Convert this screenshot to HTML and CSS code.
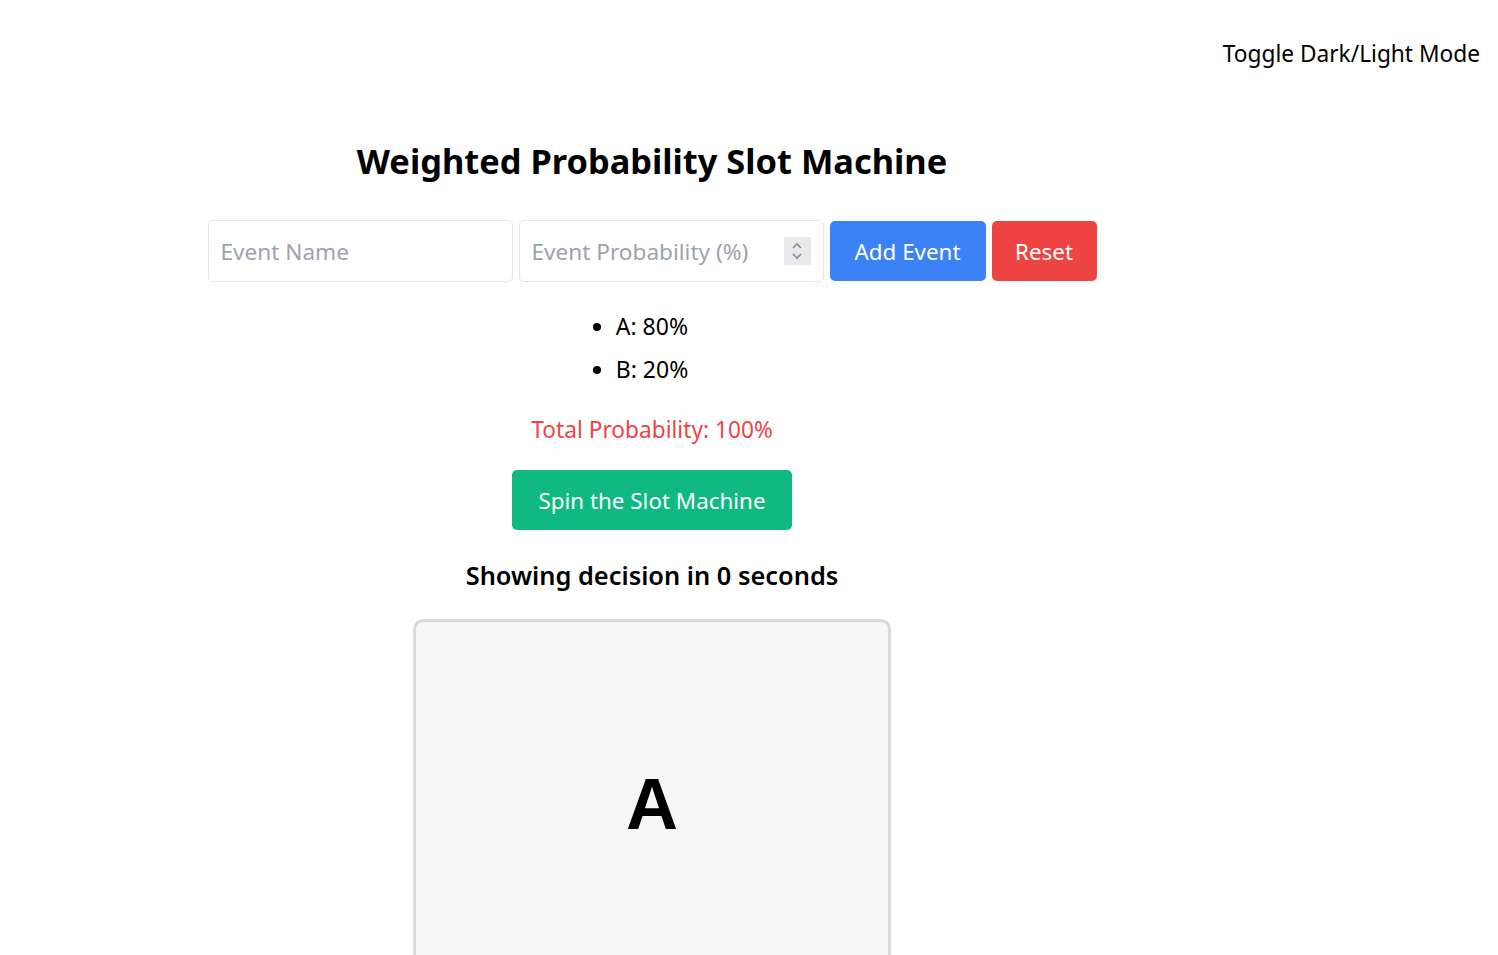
FILE: index.html
```html
<!DOCTYPE html>
<html lang="en">
<head>
<meta charset="utf-8">
<title>Weighted Probability Slot Machine</title>
<link rel="stylesheet" href="styles.css">
</head>
<body>
<header class="topbar">
  <button class="toggle" type="button">Toggle Dark/Light Mode</button>
</header>
<main class="app">
  <h1 class="title">Weighted Probability Slot Machine</h1>
  <div class="form-row">
    <input class="field" type="text" placeholder="Event Name">
    <div class="field-wrap">
      <input class="field" type="text" placeholder="Event Probability (%)">
      <span class="spinner" aria-hidden="true">
        <svg width="12" height="22" viewBox="0 0 12 22"><path d="M2 8 L6 4 L10 8" fill="none" stroke="#8a8a94" stroke-width="1.6"/><path d="M2 14 L6 18 L10 14" fill="none" stroke="#8a8a94" stroke-width="1.6"/></svg>
      </span>
    </div>
    <button class="btn btn-blue" type="button">Add Event</button>
    <button class="btn btn-red" type="button">Reset</button>
  </div>
  <ul class="events">
    <li>A: 80%</li>
    <li>B: 20%</li>
  </ul>
  <p class="total">Total Probability: 100%</p>
  <button class="btn btn-green" type="button">Spin the Slot Machine</button>
  <p class="countdown">Showing decision in 0 seconds</p>
  <div class="slot">
    <span class="slot-value">A</span>
  </div>
</main>
</body>
</html>
```
FILE: styles.css
```css
html, body {
  margin: 0;
  padding: 0;
  background: #ffffff;
  color: #000000;
  font-family: "Noto Sans", "Open Sans", sans-serif;
  overflow: hidden;
}

.topbar {
  display: flex;
  justify-content: flex-end;
  padding: 35px 18px 0 0;
  height: 37px;
}

.toggle {
  background: none;
  border: none;
  padding: 0;
  font-family: inherit;
  font-size: 22.7px;
  line-height: 36px;
  color: #000;
}

.app {
  width: 1304px;
  display: flex;
  flex-direction: column;
  align-items: center;
  padding-top: 64px;
}

.title {
  margin: 0;
  font-size: 34.4px;
  line-height: 50px;
  font-weight: 700;
}

.form-row {
  display: flex;
  gap: 6px;
  margin-top: 34px;
  align-items: center;
}

.field-wrap {
  position: relative;
  display: flex;
}

.field {
  width: 305px;
  height: 62px;
  box-sizing: border-box;
  border: 1px solid #e5e7eb;
  border-radius: 5px;
  padding: 0 12px;
  font-family: inherit;
  font-size: 22.6px;
  color: #000;
  outline: none;
}

.field::placeholder {
  color: #9ca3af;
}

.spinner {
  position: absolute;
  right: 13px;
  top: 17px;
  width: 27px;
  height: 28px;
  background: #e9e9ed;
  display: flex;
  align-items: center;
  justify-content: center;
}

.btn {
  border: none;
  border-radius: 5px;
  color: #fff;
  font-family: inherit;
  font-size: 22.4px;
  height: 60px;
  padding: 0 20px;
}

.btn-blue { background: #3b82f6; width: 156px; }
.btn-red { background: #ef4444; width: 105px; }
.btn-green {
  background: #10b981;
  width: 280px;
  margin-top: 25px;
}

.events {
  margin: 23px 0 0 0;
  padding: 0;
  font-size: 23px;
  line-height: 43px;
}

.total {
  margin: 24px 0 0 0;
  font-size: 22.7px;
  line-height: 30px;
  color: #ef4444;
}

.countdown {
  margin: 30px 0 0 0;
  font-size: 25.4px;
  line-height: 30px;
  font-weight: 600;
}

.slot {
  margin-top: 29px;
  width: 478px;
  height: 370px;
  box-sizing: border-box;
  border: 3px solid #dadada;
  border-radius: 10px;
  background: #f5f8fb;
  display: flex;
  align-items: center;
  justify-content: center;
}

.slot-value {
  font-family: "Liberation Sans", Arial, sans-serif;
  font-weight: 700;
  font-size: 72px;
  line-height: 1;
}
```
